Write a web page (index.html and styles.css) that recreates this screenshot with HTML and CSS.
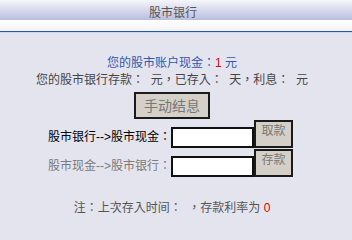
FILE: index.html
```html
<!DOCTYPE html>
<html lang="zh-CN">
<head>
<meta charset="utf-8">
<title>股市银行</title>
<link rel="stylesheet" href="styles.css">
</head>
<body>
<div class="page">
  <div class="header"><span class="title">股市银行</span></div>
  <div class="strip"></div>
  <div class="content">
    <p class="cash">您的股市账户现金：<span class="red">1</span> 元</p>
    <p class="deposit">您的股市银行存款：&nbsp; 元，已存入：&nbsp; 天，利息：&nbsp; 元</p>
    <div class="settle-row"><button class="btn btn-settle" type="button">手动结息</button></div>
    <div class="form">
      <div class="row">
        <span class="label label-dark">股市银行--&gt;股市现金：</span>
        <input class="field" type="text">
        <button class="btn btn-small" type="button">取款</button>
      </div>
      <div class="row">
        <span class="label label-light">股市现金--&gt;股市银行：</span>
        <input class="field" type="text">
        <button class="btn btn-small" type="button">存款</button>
      </div>
    </div>
    <p class="note">注：上次存入时间：&nbsp; ，存款利率为 <span class="red">0</span></p>
  </div>
</div>
</body>
</html>
```

FILE: styles.css
```css
html, body {
  margin: 0;
  padding: 0;
  background: #e4e4ee;
}
body {
  font-family: "Liberation Sans", "Noto Sans CJK TC", sans-serif;
  font-feature-settings: "locl" 0;
  font-size: 12px;
  color: #444;
}
.page {
  width: 352px;
  height: 234px;
  overflow: hidden;
  display: flex;
  flex-direction: column;
}
.header {
  height: 20px;
  box-sizing: border-box;
  padding-top: 5px;
  padding-right: 6px;
  text-align: center;
  line-height: 16px;
  background: linear-gradient(to bottom, #f6f6fa 0%, #dadcee 45%, #b9bedd 100%);
}
.title {
  color: #555;
  font-size: 12px;
}
.strip {
  height: 11px;
  background: linear-gradient(to bottom, #ffffff, #f3f3f8);
  border-bottom: 1px solid #2658a8;
  box-shadow: 0 1px 0 #c6d6ee;
}
.content {
  flex: 1;
  padding-right: 8px;
  text-align: center;
}
p {
  margin: 0;
}
.cash {
  margin-top: 23px;
  line-height: 17px;
  color: #3158b0;
}
.red {
  color: #e00000;
}
.deposit {
  line-height: 17px;
  color: #454545;
}
.settle-row {
  margin-top: 3px;
}
.btn {
  font-family: "Liberation Sans", "Noto Sans CJK TC", sans-serif;
  font-feature-settings: "locl" 0;
  background: #d4d0c8;
  border: 2px solid #1a1a1a;
  color: #777;
  padding: 0;
  margin: 0;
  box-sizing: border-box;
}
.btn-settle {
  width: 76px;
  height: 27px;
  font-size: 14px;
  line-height: 20px;
}
.form {
  margin-top: 1px;
  display: flex;
  flex-direction: column;
  align-items: flex-start;
  padding-left: 48px;
  gap: 1px;
}
.row {
  display: flex;
  align-items: flex-end;
}
.label {
  width: 123px;
  text-align: left;
  line-height: 21px;
}
.label-dark {
  color: #000;
}
.label-light {
  color: #7a7a7a;
}
.field {
  width: 83px;
  height: 21px;
  box-sizing: border-box;
  border: 2px solid #111;
  background: #fff;
  margin: 0;
  padding: 0 2px;
}
.btn-small {
  width: 39px;
  height: 28px;
  font-size: 12px;
  line-height: 16px;
  padding-bottom: 6px;
}
.note {
  margin-top: 23px;
  line-height: 17px;
  color: #555;
}
```
